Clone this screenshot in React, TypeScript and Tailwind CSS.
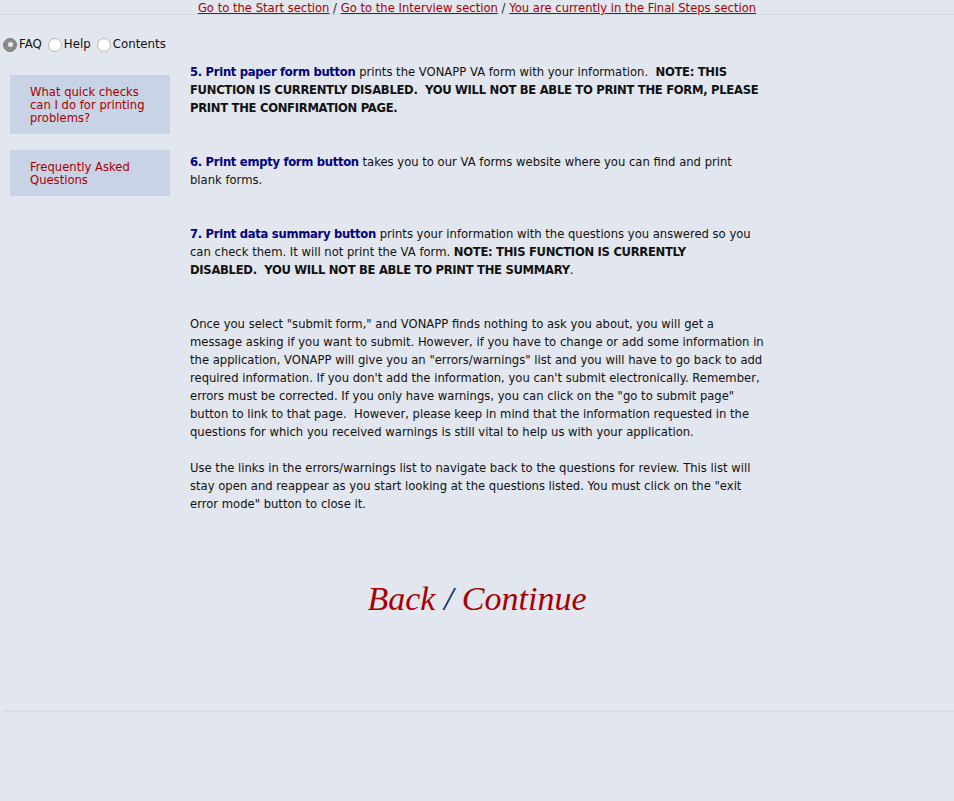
import React, { useState } from 'react';

const sans = { fontFamily: '"DejaVu Sans", Verdana, sans-serif' };

function Radio({ label, checked, onClick }: { label: string; checked: boolean; onClick: () => void }) {
  return (
    <label className="flex items-center cursor-pointer" onClick={onClick}>
      <span
        className={`w-[14px] h-[14px] rounded-full border flex items-center justify-center mr-[2px] ${
          checked ? 'bg-[#8a8a8a] border-[#7a7a7a]' : 'bg-white border-[#b8b8b8]'
        }`}
      >
        {checked && <span className="w-[5px] h-[5px] rounded-full bg-[#e8e8e8]" />}
      </span>
      <span>{label}</span>
    </label>
  );
}

export default function App() {
  const [tab, setTab] = useState('FAQ');

  return (
    <div className="min-h-[801px] bg-[#e2e6ee] text-[#111] text-[11.6px]" style={sans}>
      <div className="h-[15px] border-b border-[#d3d7de] text-center text-[11.6px] leading-[14px] pt-[1px] text-[#222]">
        <a href="#" className="text-[#a80000] underline">Go to the Start section</a>
        {' / '}
        <a href="#" className="text-[#a80000] underline">Go to the Interview section</a>
        {' / '}
        <a href="#" className="text-[#a80000] underline">You are currently in the Final Steps section</a>
      </div>

      <div className="flex gap-[6px] pl-[3px] pt-[21px] text-[11.8px] text-[#111]">
        <Radio label="FAQ" checked={tab === 'FAQ'} onClick={() => setTab('FAQ')} />
        <Radio label="Help" checked={tab === 'Help'} onClick={() => setTab('Help')} />
        <Radio label="Contents" checked={tab === 'Contents'} onClick={() => setTab('Contents')} />
      </div>

      <div className="flex">
        <div className="w-[170px] pl-[10px] pt-[21px] flex flex-col gap-[16px] shrink-0">
          <div className="bg-[#c8d3e5] pl-[20px] pr-[14px] pt-[11px] pb-[9px] text-[#a80000] leading-[13px]">
            What quick checks can I do for printing problems?
          </div>
          <div className="bg-[#c8d3e5] pl-[20px] pr-[14px] pt-[11px] pb-[9px] text-[#a80000] leading-[13px]">
            Frequently Asked Questions
          </div>
        </div>

        <div className="ml-[20px] w-[574px] pt-[9px] leading-[18px]">
          <p>
            <b className="text-[#000080] tracking-[-0.3px]">5. Print paper form button</b> prints the VONAPP VA form with your information.&nbsp;{' '}
            <b className="tracking-[-0.3px]">NOTE: THIS FUNCTION IS CURRENTLY DISABLED.&nbsp; YOU WILL NOT BE ABLE TO PRINT THE FORM, PLEASE PRINT THE CONFIRMATION PAGE.</b>
          </p>
          <p className="mt-[36px]">
            <b className="text-[#000080] tracking-[-0.3px]">6. Print empty form button</b> takes you to our VA forms website where you can find and print blank forms.
          </p>
          <p className="mt-[36px]">
            <b className="text-[#000080] tracking-[-0.3px]">7. Print data summary button</b> prints your information with the questions you answered so you can check them. It will not print the VA form.{' '}
            <b className="tracking-[-0.3px]">NOTE: THIS FUNCTION IS CURRENTLY<br />DISABLED.&nbsp; YOU WILL NOT BE ABLE TO PRINT THE SUMMARY</b>.
          </p>
          <p className="mt-[36px]">
            Once you select "submit form," and VONAPP finds nothing to ask you about, you will get a message asking if you want to submit. However, if you have to change or add some information in the application, VONAPP will give you an "errors/warnings" list and you will have to go back to add required information. If you don't add the information, you can't submit electronically. Remember, errors must be corrected. If you only have warnings, you can click on the "go to submit page" button to link to that page.&nbsp; However, please keep in mind that the information requested in the questions for which you received warnings is still vital to help us with your application.
          </p>
          <p className="mt-[18px]">
            Use the links in the errors/warnings list to navigate back to the questions for review. This list will stay open and reappear as you start looking at the questions listed. You must click on the "exit error mode" button to close it.
          </p>
        </div>
      </div>

      <div className="text-center mt-[60px] text-[34px] italic" style={{ fontFamily: '"Liberation Serif", Georgia, serif' }}>
        <a href="#" className="text-[#a80000]">Back</a>
        <span className="text-[#0a2a6a]"> / </span>
        <a href="#" className="text-[#a80000]">Continue</a>
      </div>

      <div className="mt-[86px] ml-[4px] border-t-2 border-[#d8dce3]" />
    </div>
  );
}
